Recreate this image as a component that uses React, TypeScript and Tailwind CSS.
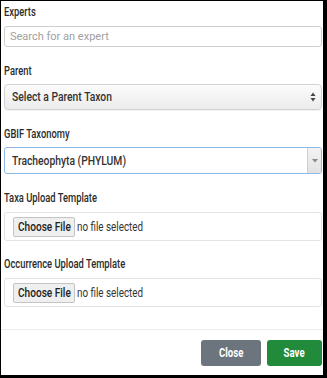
import React from "react"

// the reference text is rendered narrow, so squeeze it horizontally
function Label({ children, className = "" }: { children: React.ReactNode; className?: string }) {
  return (
    <div className={`h-[16px] text-[12px] font-medium leading-[16px] text-[#2b2b2b] ${className}`}>
      <span className="inline-block origin-left scale-x-[0.78] whitespace-nowrap">{children}</span>
    </div>
  )
}

function FileField() {
  return (
    <div className="flex h-[29px] items-center rounded-[3px] border border-[#e3e3e3] pl-[8px]">
      <button className="flex h-[20px] w-[62px] items-center justify-center rounded-[2px] border border-[#c4c4c4] bg-[#efefef] text-[12px] font-medium text-[#222]">
        <span className="inline-block scale-x-[0.84] whitespace-nowrap">Choose File</span>
      </button>
      <span className="ml-[2px] inline-block origin-left scale-x-[0.82] whitespace-nowrap text-[12px] text-[#333]">
        no file selected
      </span>
    </div>
  )
}

export default function App() {
  return (
    <div className="flex h-[378px] w-[327px] flex-col border-b-[3px] border-l border-r-4 border-t border-black bg-white font-['Roboto',sans-serif]">
      <div className="flex flex-col pl-[3px] pr-[1px]">
        <Label className="mt-[3px]">Experts</Label>
        <input
          className="mt-[6px] h-[21px] rounded-[3px] border border-[#cfcfcf] px-[5px] text-[11px] text-[#333] outline-none placeholder:text-[#a0a0a0]"
          placeholder="Search for an expert"
        />

        <Label className="mt-[16px]">Parent</Label>
        <div className="mt-[5px] flex h-[26px] items-center justify-between rounded-[4px] border border-[#d2d2d2] bg-linear-to-b from-[#fbfbfb] to-[#ececec] pl-[7px] pr-[5px] shadow-[0_1px_1px_rgba(0,0,0,0.06)]">
          <span className="inline-block origin-left scale-x-[0.86] whitespace-nowrap text-[12px] font-medium text-[#333]">
            Select a Parent Taxon
          </span>
          <svg width="6" height="10" viewBox="0 0 6 10" className="fill-[#444]">
            <path d="M3 0.5 L5.5 4 H0.5 Z" />
            <path d="M3 9.5 L5.5 6 H0.5 Z" />
          </svg>
        </div>

        <Label className="mt-[16px]">GBIF Taxonomy</Label>
        <div className="mt-[5px] flex h-[27px] items-stretch overflow-hidden rounded-[3px] border border-[#8db8e8] bg-white">
          <div className="flex flex-1 items-center pl-[7px]">
            <span className="inline-block origin-left scale-x-[0.86] whitespace-nowrap text-[12px] font-medium text-[#333]">
              Tracheophyta (PHYLUM)
            </span>
          </div>
          <div className="flex w-[14px] items-center justify-center border-l border-[#cfcfcf] bg-linear-to-b from-[#f3f3f3] to-[#e2e2e2]">
            <svg width="6" height="4" viewBox="0 0 6 4" className="fill-[#888]">
              <path d="M0 0 H6 L3 3.5 Z" />
            </svg>
          </div>
        </div>

        <Label className="mt-[16px]">Taxa Upload Template</Label>
        <div className="mt-[6px]">
          <FileField />
        </div>

        <Label className="mt-[15px]">Occurrence Upload Template</Label>
        <div className="mt-[6px]">
          <FileField />
        </div>
      </div>

      <div className="mt-[22px] border-t border-[#ececec]" />

      <div className="flex justify-end gap-[6px] pr-[1px] pt-[10px]">
        <button className="flex h-[26px] w-[60px] items-center justify-center rounded-[3px] bg-[#6c747d] text-[12px] font-bold text-white">
          <span className="inline-block scale-x-[0.8]">Close</span>
        </button>
        <button className="flex h-[26px] w-[55px] items-center justify-center rounded-[3px] bg-[#228b3b] text-[12px] font-bold text-white">
          <span className="inline-block scale-x-[0.8]">Save</span>
        </button>
      </div>
    </div>
  )
}
